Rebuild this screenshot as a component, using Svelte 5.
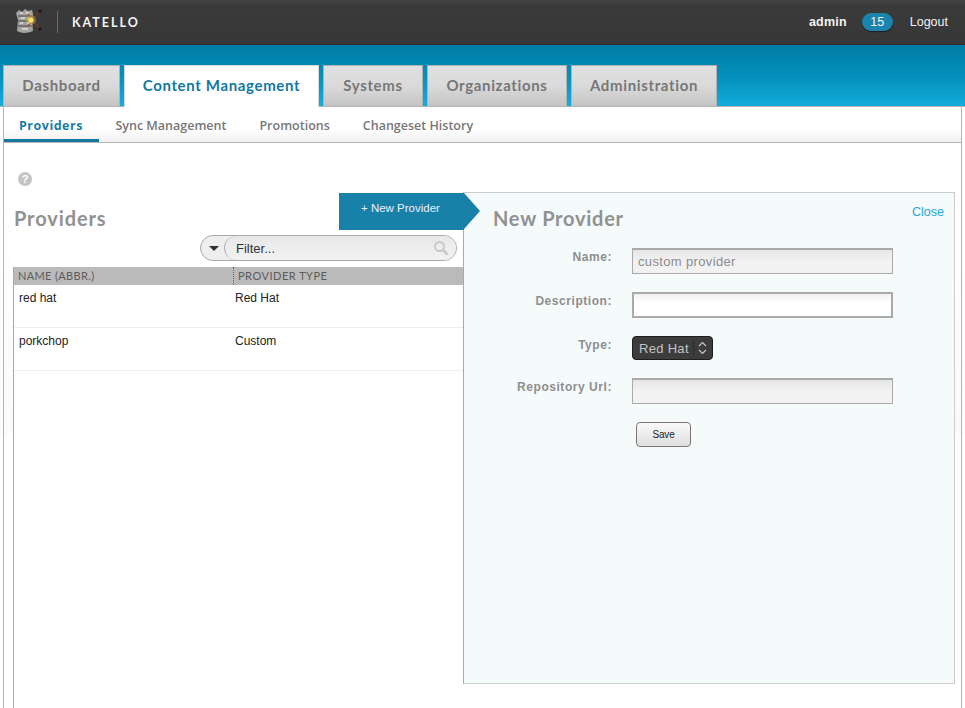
<script lang="ts">
  const tabs = ["Dashboard", "Content Management", "Systems", "Organizations", "Administration"];
  const subTabs = ["Providers", "Sync Management", "Promotions", "Changeset History"];
  const providers = [
    { name: "red hat", type: "Red Hat" },
    { name: "porkchop", type: "Custom" }
  ];
</script>

<div class="page">
  <header class="topbar">
    <div class="brand">
      <svg class="logo" width="27" height="27" viewBox="0 0 27 27">
        <path d="M1 5 L4 2 L7 4 L10 1 L13 3 L17 2 L18 6 L17 12 L18 23 Q9 27 2 23 L3 12 Z" fill="#a3a39f" />
        <path d="M3 8 H17 M3 13 H17 M3 18 H17" stroke="#6a6a68" stroke-width="1.3" />
        <path d="M5 5 H8 M11 5 H14 M6 10 H10 M12 15 H15 M5 15 H8 M7 21 H13" stroke="#dededc" stroke-width="1.5" />
        <path d="M25 3 L13 18 M13 6 L25 21" stroke="#8d2a2a" stroke-width="1.1" />
        <circle cx="25" cy="3" r="1.5" fill="#141414" />
        <circle cx="25" cy="21" r="1.5" fill="#141414" />
        <circle cx="16" cy="12" r="5" fill="#d9b93c" opacity="0.4" />
        <circle cx="16" cy="12" r="2.6" fill="#fbe36a" />
      </svg>
      <span class="divider"></span>
      <span class="product">KATELLO</span>
    </div>
    <div class="user">
      <span class="username">admin</span>
      <span class="badge">15</span>
      <span class="logout">Logout</span>
    </div>
  </header>

  <nav class="band">
    {#each tabs as tab, i}
      <div class="tab" class:active={i === 1}>{tab}</div>
    {/each}
  </nav>

  <div class="subnav">
    {#each subTabs as tab, i}
      <div class="subtab" class:active={i === 0}>{tab}</div>
    {/each}
  </div>

  <main class="content">
    <div class="help">?</div>
    <div class="columns">
      <section class="list">
        <h1>Providers</h1>
        <div class="filter-row">
          <div class="filter">
            <span class="caret"></span>
            <div class="filter-input">
              <span>Filter...</span>
              <svg width="16" height="16" viewBox="0 0 16 16">
                <circle cx="6.5" cy="6.5" r="4.5" fill="none" stroke="#c9c9c9" stroke-width="2" />
                <path d="M10 10 L14.5 14.5" stroke="#c9c9c9" stroke-width="2.6" />
              </svg>
            </div>
          </div>
        </div>
        <div class="table-head">
          <span class="col-name">NAME (ABBR.)</span>
          <span class="col-type">PROVIDER TYPE</span>
        </div>
        {#each providers as p}
          <div class="row">
            <span class="cell-name">{p.name}</span>
            <span>{p.type}</span>
          </div>
        {/each}
      </section>

      <section class="panel">
        <div class="new-btn">+ New Provider</div>
        <span class="close">Close</span>
        <h2>New Provider</h2>
        <form class="fields">
          <div class="label">Name:</div>
          <div class="input disabled">custom provider</div>
          <div class="label">Description:</div>
          <div class="input"></div>
          <div class="label">Type:</div>
          <div class="select">
            <span class="select-text">Red Hat</span>
            <span class="select-arrows">
              <svg width="9" height="14" viewBox="0 0 9 14">
                <path d="M1 5 L4.5 1.5 L8 5 M1 9 L4.5 12.5 L8 9" fill="none" stroke="#c6c6c6" stroke-width="1.2" />
              </svg>
            </span>
          </div>
          <div class="label">Repository Url:</div>
          <div class="input disabled"></div>
          <div></div>
          <div class="save">Save</div>
        </form>
      </section>
    </div>
  </main>
</div>

<style>
  :global(body) {
    margin: 0;
    background: #fff;
  }

  .page {
    width: 965px;
    height: 708px;
    overflow: hidden;
    font-family: "Liberation Sans", Arial, sans-serif;
    background: linear-gradient(#fff 200px, #fafafa 430px, #fff 441px);
  }

  .topbar {
    height: 45px;
    box-sizing: border-box;
    display: flex;
    justify-content: space-between;
    align-items: center;
    background: linear-gradient(#454545 0, #3a3a3a 6px, #373737 100%);
    border-bottom: 1px solid #2b2b2b;
    padding: 0 17px 0 15px;
  }

  .brand {
    display: flex;
    align-items: center;
  }

  .logo {
    display: block;
    margin-top: -1px;
  }

  .divider {
    width: 1px;
    height: 22px;
    background: #5f6b7c;
    margin: 0 14px 0 15px;
  }

  .product {
    font-family: Lato, sans-serif;
    font-weight: 700;
    font-size: 12.5px;
    letter-spacing: 2px;
    color: #f4f4f4;
  }

  .user {
    display: flex;
    align-items: center;
    font-size: 12.5px;
    color: #f2f2f2;
  }

  .username {
    font-weight: 700;
    font-size: 12.5px;
    letter-spacing: 0.2px;
  }

  .badge {
    width: 31px;
    height: 18px;
    line-height: 18px;
    margin: 0 17px 0 15px;
    text-align: center;
    font-size: 12.5px;
    border-radius: 9px;
    background: #1a84ad;
    box-shadow: 0 1px 1px #1d1d1d;
  }

  .band {
    height: 62px;
    box-sizing: border-box;
    padding: 20px 0 0 3px;
    display: grid;
    grid-template-columns: 117px 195px 100px 140px 146px;
    gap: 4px;
    background: linear-gradient(#007ca6 0, #0490ba 50%, #14abdc 100%);
    border-bottom: 1px solid #b5b5b0;
  }

  .tab {
    height: 41px;
    box-sizing: border-box;
    border: 1px solid #b2b2b2;
    border-bottom: none;
    background: linear-gradient(#e0e0e0 0, #dadada 50%, #c4c4c4 100%);
    font-family: Lato, sans-serif;
    font-weight: 700;
    font-size: 15px;
    letter-spacing: 0.65px;
    line-height: 39px;
    text-align: center;
    color: #777;
  }

  .tab.active {
    height: 42px;
    background: #fff;
    color: #14789f;
    border-color: #d8d8d8;
    position: relative;
    z-index: 1;
  }

  .subnav {
    height: 36px;
    box-sizing: border-box;
    margin: 0 3px;
    display: flex;
    background: linear-gradient(#fff 60%, #f1f1f1 100%);
    border-left: 1px solid #b5b5b0;
    border-right: 1px solid #b5b5b0;
    border-bottom: 1px solid #b5b5b0;
  }

  .subtab {
    padding: 0 16.5px;
    font-family: "Open Sans", sans-serif;
    font-size: 12.5px;
    font-weight: 600;
    line-height: 37px;
    height: 35px;
    box-sizing: border-box;
    color: #777;
  }

  .subtab.active {
    padding: 0 16px 0 15px;
    color: #1a7da3;
    font-weight: 700;
    letter-spacing: 0.5px;
    border-bottom: 3px solid #14789f;
  }

  .content {
    margin: 0 3px;
    padding: 29px 6px 0 9px;
    height: 565px;
    box-sizing: border-box;
    border-left: 1px solid #b5b5b0;
    border-right: 1px solid #b5b5b0;
  }

  .help {
    width: 14px;
    height: 14px;
    margin-left: 5px;
    border-radius: 50%;
    background: #c4c4c4;
    color: #fff;
    font-size: 11px;
    font-weight: 700;
    line-height: 14px;
    text-align: center;
  }

  .columns {
    display: flex;
    margin-top: 6px;
  }

  .list {
    flex: none;
    width: 450px;
    box-sizing: border-box;
    height: 540px;
    position: relative;
    background: #fff;
  }

  .list::after {
    content: "";
    position: absolute;
    left: 0;
    top: 92px;
    bottom: 0;
    width: 1px;
    background: #aaa;
  }

  h1,
  h2 {
    margin: 0;
    font-family: Lato, sans-serif;
    font-weight: 700;
    font-size: 20px;
    letter-spacing: 0.9px;
    color: #919191;
  }

  h1 {
    padding: 14px 0 0 1px;
    line-height: 24px;
  }

  h2 {
    line-height: 24px;
    letter-spacing: 0.75px;
  }

  .filter-row {
    display: flex;
    justify-content: flex-end;
    margin-top: 5px;
    padding-right: 6px;
  }

  .filter {
    width: 257px;
    height: 26px;
    box-sizing: border-box;
    display: flex;
    align-items: center;
    border: 1px solid #aaa;
    border-radius: 13px;
    background: #eee;
  }

  .caret {
    margin-left: 8px;
    width: 0;
    height: 0;
    border-left: 5px solid transparent;
    border-right: 5px solid transparent;
    border-top: 5px solid #333;
  }

  .filter-input {
    flex: 1;
    height: 24px;
    margin-left: 5px;
    box-sizing: border-box;
    padding: 0 7px 0 11px;
    display: flex;
    align-items: center;
    justify-content: space-between;
    border-left: 1px solid #aaa;
    border-radius: 12px;
    background: linear-gradient(#e8e8e8, #f2f2f2);
    font-size: 13px;
    color: #333;
  }

  .table-head {
    margin-top: 6px;
    height: 18px;
    display: flex;
    background: #bababa;
    border-left: 1px solid #aaa;
    font-family: Lato, sans-serif;
    font-size: 11px;
    letter-spacing: 0.35px;
    line-height: 18px;
    color: #5c5c5c;
  }

  .col-name {
    width: 220px;
    padding-left: 4px;
    box-sizing: border-box;
    border-right: 1px dotted #666;
    margin-right: 4px;
  }

  .col-type {
    letter-spacing: 0.5px;
  }

  .row {
    height: 43px;
    box-sizing: border-box;
    display: flex;
    padding-top: 6px;
    border-left: 1px solid #aaa;
    border-bottom: 1px solid #eee;
    font-size: 12px;
    line-height: 15px;
    color: #222;
  }

  .cell-name {
    width: 221px;
    padding-left: 5px;
    box-sizing: border-box;
  }

  .panel {
    position: relative;
    flex: none;
    width: 492px;
    height: 492px;
    box-sizing: border-box;
    padding: 13px 0 0 29px;
    background: #f5fafb;
    border: 1px solid #ccc;
    border-left-color: #aaa;
  }

  .new-btn {
    position: absolute;
    left: -125px;
    top: 0;
    width: 125px;
    height: 37px;
    box-sizing: border-box;
    padding: 9px 0 0 22px;
    background: #1781a7;
    color: #eef;
    font-size: 11.5px;
  }

  .new-btn::after {
    content: "";
    position: absolute;
    left: 100%;
    top: 0;
    border-left: 16px solid #1781a7;
    border-top: 18.5px solid transparent;
    border-bottom: 18.5px solid transparent;
  }

  .close {
    position: absolute;
    right: 10px;
    top: 12px;
    font-size: 12.5px;
    color: #22a6d2;
  }

  .fields {
    margin-top: 18px;
    display: grid;
    grid-template-columns: 119px 261px;
    column-gap: 20px;
    row-gap: 18px;
    align-items: start;
  }

  .label {
    text-align: right;
    font-size: 12px;
    font-weight: 700;
    letter-spacing: 0.55px;
    line-height: 14px;
    color: #8e8e8e;
    margin-top: 2px;
  }

  .input {
    height: 26px;
    box-sizing: border-box;
    border: 2px solid #aaa;
    background: linear-gradient(#f1f1f1, #fff 40%);
  }

  .input.disabled {
    border-width: 1px;
    border-top-width: 2px;
    background: linear-gradient(#e6e6e6, #f2f2f2 50%);
    font-size: 13px;
    line-height: 24px;
    padding-left: 5px;
    letter-spacing: 0.35px;
    color: #8b8b8b;
  }

  .select {
    width: 81px;
    height: 24px;
    box-sizing: border-box;
    display: flex;
    align-items: center;
    border: 1px solid #1e1e1e;
    border-radius: 4px;
    background: #3c3c3c;
    color: #c4c4c4;
    font-size: 13px;
    letter-spacing: 0.3px;
  }

  .select-text {
    padding-left: 6px;
    width: 54px;
    white-space: nowrap;
  }

  .select-arrows {
    display: flex;
    align-items: center;
    height: 16px;
    padding-left: 4px;
    border-left: 1px solid #2a2a2a;
  }

  .save {
    width: 55px;
    height: 25px;
    margin-left: 4px;
    box-sizing: border-box;
    border: 1px solid #777;
    border-radius: 4px;
    background: linear-gradient(#fafafa, #dedede);
    text-align: center;
    line-height: 23px;
    font-size: 10px;
    letter-spacing: -0.2px;
    color: #222;
  }
</style>
